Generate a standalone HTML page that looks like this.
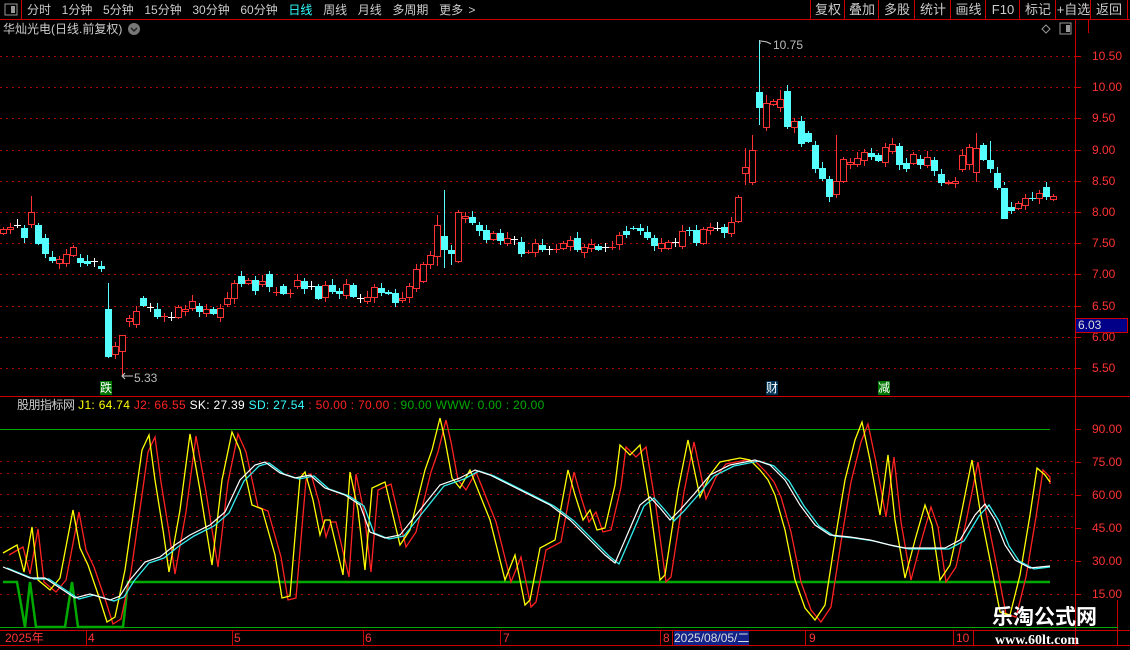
<!DOCTYPE html>
<html><head><meta charset="utf-8"><style>
html,body{margin:0;padding:0;background:#000;width:1130px;height:650px;overflow:hidden}
body{position:relative;font-family:"Liberation Sans","Noto Sans CJK SC",sans-serif;color:#ccc}
.t{position:absolute;font-size:13px;white-space:nowrap;line-height:15px}
.btn{position:absolute;top:0;height:19px;border-left:1px solid #c00;font-size:13px;color:#ccc;text-align:center;line-height:19px}
svg{position:absolute;left:0;top:0}
</style></head><body>
<svg id="s" width="1130" height="650" xmlns="http://www.w3.org/2000/svg"></svg>

<div class="t" style="left:27px;top:3px;font-size:12px;word-spacing:2px">分时&nbsp; 1分钟&nbsp; 5分钟&nbsp; 15分钟&nbsp; 30分钟&nbsp; 60分钟&nbsp; <span style="color:#3ff">日线</span>&nbsp; 周线&nbsp; 月线&nbsp; 多周期&nbsp; 更多 &gt;</div>
<div class="btn" style="left:810px;width:34px">复权</div>
<div class="btn" style="left:844px;width:34px">叠加</div>
<div class="btn" style="left:878px;width:36px">多股</div>
<div class="btn" style="left:914px;width:36px">统计</div>
<div class="btn" style="left:950px;width:35px">画线</div>
<div class="btn" style="left:985px;width:34px">F10</div>
<div class="btn" style="left:1019px;width:36px">标记</div>
<div class="btn" style="left:1055px;width:35px">+自选</div>
<div class="btn" style="left:1090px;width:36px;border-right:1px solid #c00">返回</div>
<div class="t" style="left:3px;top:22px;color:#ccc;font-size:12px">华灿光电(日线.前复权)</div>
<div class="t" style="left:773px;top:38px;color:#bbb;font-size:12px">10.75</div>
<div class="t" style="left:134px;top:371px;color:#bbb;font-size:12px">5.33</div>
<div class="t" style="left:100px;top:381px;background:#070;color:#fff;font-size:12px;line-height:14px">跌</div>
<div class="t" style="left:766px;top:381px;background:#035;color:#fff;font-size:12px;line-height:14px">财</div>
<div class="t" style="left:878px;top:381px;background:#070;color:#fff;font-size:12px;line-height:14px">减</div>
<div class="t" style="left:17px;top:398px;font-size:12px;letter-spacing:0.3px"><span style="color:#ccc;letter-spacing:-0.5px">股朋指标网</span> <span style="color:#ff0">J1: 64.74</span> <span style="color:#f22">J2: 66.55</span> <span style="color:#fff">SK: 27.39</span> <span style="color:#3ff">SD: 27.54</span> <span style="color:#f22">: 50.00 : 70.00</span> <span style="color:#0a0">: 90.00 WWW: 0.00 : 20.00</span></div>
<div id="ax"></div>
<div class="t" style="left:1075px;top:318px;width:53px;height:15px;background:#008;border:1px solid #c00;box-sizing:border-box;color:#ddd;font-size:12px;line-height:13px;padding-left:2px">6.03</div>
<div class="t" style="left:5px;top:631px;color:#f33;font-size:12px">2025年</div>
<div class="t" style="left:88px;top:631px;color:#f33;font-size:12px">4</div>
<div class="t" style="left:234px;top:631px;color:#f33;font-size:12px">5</div>
<div class="t" style="left:365px;top:631px;color:#f33;font-size:12px">6</div>
<div class="t" style="left:503px;top:631px;color:#f33;font-size:12px">7</div>
<div class="t" style="left:663px;top:631px;color:#f33;font-size:12px">8</div>
<div class="t" style="left:674px;top:631px;width:75px;background:#128;color:#ddd;font-size:12px;line-height:14px">2025/08/05/二</div>
<div class="t" style="left:809px;top:631px;color:#f33;font-size:12px">9</div>
<div class="t" style="left:956px;top:631px;color:#f33;font-size:12px">10</div>
<div class="t" style="left:992px;top:606px;color:#fff;font-size:21px;font-weight:bold;line-height:24px">乐淘公式网</div>
<div class="t" style="left:995px;top:633px;color:#fff;font-size:14px;font-weight:bold;font-family:'Liberation Serif',serif">www.60lt.com</div>

<script>
var s=document.getElementById('s'),h='';
function L(x1,y1,x2,y2,c,w,d){h+='<line x1="'+x1+'" y1="'+y1+'" x2="'+x2+'" y2="'+y2+'" stroke="'+c+'" stroke-width="'+(w||1)+'"'+(d?' stroke-dasharray="'+d+'"':'')+'/>';}
function R(x,y,w,hh,f,st){h+='<rect x="'+x+'" y="'+y+'" width="'+w+'" height="'+hh+'" fill="'+f+'"'+(st?' stroke="'+st+'"':'')+'/>';}
function P(pts,c,w){h+='<polyline fill="none" stroke="'+c+'" stroke-width="'+(w||1)+'" points="'+pts.map(function(p){return p[0]+','+p[1]}).join(' ')+'"/>';}
L(0,19.5,1130,19.5,'#c00');L(21.5,0,21.5,19,'#c00');
R(5,4,12,11,'none','#999');R(11,6,4,7,'#999');
h+='<circle cx="134" cy="29" r="6" fill="#777"/><path d="M131 28l3 3 3-3" stroke="#222" fill="none" stroke-width="1.5"/>';
h+='<path d="M1046 25l4 4-4 4-4-4z" fill="none" stroke="#999"/>';R(1060,23,11,11,'none','#999');R(1066,25,4,7,'#999');
L(1075.5,20,1075.5,645,'#c00');L(0,396.5,1130,396.5,'#c00');L(1088.5,20,1088.5,33,'#c00');
L(0,630.5,1130,630.5,'#c00');L(0,645.5,1130,645.5,'#c00');
[86,232,363,500,660,672,805,953,973].forEach(function(x){L(x+.5,631,x+.5,645,'#c00')});
L(1117.5,600,1117.5,645,'#c00');
var ax=document.getElementById('ax'),ah='';
[10.5,10,9.5,9,8.5,8,7.5,7,6.5,6,5.5].forEach(function(p){var y=Math.round(56+(10.5-p)*62.4);L(0,y+.5,1075,y+.5,'#a00',1,'2 4');L(1075,y+.5,1081,y+.5,'#c00');ah+='<div class="t" style="left:1092px;top:'+(y-7)+'px;color:#f33;font-size:12px">'+p.toFixed(2)+'</div>';});
[90,75,60,45,30,15].forEach(function(v){var y=Math.round(429+(90-v)*2.2);L(1075,y+.5,1081,y+.5,'#c00');ah+='<div class="t" style="left:1092px;top:'+(y-7)+'px;color:#f33;font-size:12px">'+v.toFixed(2)+'</div>';});
ax.innerHTML=ah;
[461,473,494,516,527,560,594].forEach(function(y){L(0,y+.5,1075,y+.5,'#a00',1,'2 5')});
var c=[[229,233,'r'],[227,229,'r'],[225,225,'w'],[228,237,'c'],[212,224,'r'],[225,243,'c'],[238,253,'c'],[257,260,'c'],[259,263,'r'],[254,263,'r'],[247,255,'r'],[258,262,'c'],[261,263,'c'],[261,261,'w'],[266,268,'c'],[309,356,'c'],[346,354,'r'],[335,351,'r'],[318,321,'r'],[311,324,'r'],[298,305,'c'],[307,307,'w'],[309,316,'c'],[316,316,'r'],[317,317,'w'],[307,317,'r'],[309,311,'r'],[301,308,'r'],[306,311,'c'],[309,313,'r'],[309,313,'c'],[308,317,'r'],[298,304,'r'],[283,298,'r'],[276,283,'c'],[280,283,'r'],[280,290,'c'],[281,284,'r'],[274,286,'c'],[292,292,'r'],[286,293,'c'],[293,293,'r'],[280,286,'r'],[281,288,'c'],[286,286,'w'],[286,298,'c'],[285,297,'r'],[285,291,'c'],[291,293,'c'],[284,295,'r'],[285,296,'c'],[298,298,'w'],[297,301,'r'],[287,297,'r'],
[288,292,'c'],[292,293,'c'],[293,302,'c'],[298,300,'r'],[286,297,'r'],[269,288,'r'],[264,281,'r'],[255,264,'r'],[225,256,'r'],[236,249,'c'],[250,253,'c'],[212,261,'r'],[216,218,'r'],[217,222,'c'],[225,230,'c'],[230,239,'c'],[233,239,'r'],[233,240,'c'],[238,243,'r'],[239,239,'w'],[242,253,'c'],[252,252,'r'],[243,252,'r'],[245,249,'c'],[249,249,'w'],[249,249,'r'],[243,248,'r'],[240,246,'r'],[238,249,'c'],[247,252,'r'],[244,248,'r'],[246,249,'c'],[247,247,'w'],[247,247,'r'],[235,244,'r'],[231,234,'c'],[228,228,'c'],[228,230,'c'],[232,237,'c'],[238,245,'c'],[243,248,'r'],[242,248,'r'],[242,242,'w'],[231,246,'r'],[230,230,'c'],[230,242,'c'],[229,243,'r'],[227,230,'r'],[228,228,'w'],[227,232,'c'],[222,233,'r'],[197,221,'r'],
[167,173,'r'],[150,182,'r'],[92,107,'c'],[103,127,'r'],[101,104,'r'],[99,107,'r'],[91,126,'c'],[121,127,'r'],[121,143,'c'],[133,141,'c'],[145,168,'c'],[168,178,'c'],[179,196,'c'],[181,194,'r'],[159,181,'r'],[162,164,'r'],[158,164,'r'],[152,160,'r'],[153,156,'c'],[155,160,'c'],[147,162,'r'],[144,151,'r'],[146,164,'c'],[163,168,'c'],[154,163,'r'],[159,164,'c'],[157,165,'r'],[160,170,'c'],[174,182,'c'],[182,183,'r'],[181,183,'r'],[155,169,'r'],[147,164,'r'],[148,172,'r'],[145,159,'c'],[160,168,'c'],[173,187,'c'],[188,218,'c'],[207,210,'c'],[203,208,'r'],[198,205,'r'],[198,198,'c'],[193,198,'r'],[187,196,'c'],[196,199,'r']];
var hi={4:196,15:283,17:340,63:190,62:215,108:40,106:148,107:135,109:95,111:90,119:135,139:133,141:141};
var lo={17:375,15:358,62:266,64:265,108:125,106:185,139:182,143:182,63:268};
c.forEach(function(d,i){var x=3+7*i,col=d[2]=='r'?'#f33':d[2]=='c'?'#5ff':'#fff';var t=d[0],b=d[1];
var hy=hi[i]!=null?hi[i]:t-2-(i*7%5),ly=lo[i]!=null?lo[i]:b+2+(i*3%5);
L(x+.5,hy,x+.5,ly,col);
if(b-t<1){L(x-3,t+.5,x+4,t+.5,col);}
else if(d[2]=='r'){R(x-2.5,t+.5,6,b-t,'#000',col);}
else R(x-3,t,7,b-t+1,col);});
L(760,44,760,40,'#ccc');P([[761,41],[767,42],[771,44]],'#ccc');P([[122,376],[133,376]],'#ccc');P([[125,373],[122,376],[125,379]],'#ccc');
L(0,429.5,1050,429.5,'#0a0');L(0,627.5,1118,627.5,'#0a0');
P([[3,582],[17,582],[25,627],[30,582],[36,627],[65,627],[72,582],[78,627],[123,627],[128,582],[1050,582]],'#0a0',2.5);
var y=[[3,553],[17,545],[24,572],[32,527],[38,580],[50,590],[55,584],[60,578],[73,510],[80,548],[88,565],[100,600],[107,622],[115,617],[125,570],[135,500],[142,450],[149,435],[155,480],[163,530],[169,572],[180,510],[190,434],[200,490],[212,565],[222,480],[232,432],[240,450],[252,505],[262,509],[275,555],[282,598],[290,596],[300,478],[305,472],[313,500],[320,535],[325,520],[330,520],[343,575],[350,472],[358,510],[365,570],[372,488],[385,482],[400,545],[410,530],[425,470],[432,450],[440,418],[445,440],[452,478],[460,488],[470,470],[490,520],[505,580],[515,555],[525,605],[530,600],[540,548],[555,540],[568,470],[575,495],[583,520],[590,510],[597,530],[605,528],[615,485],[620,445],[630,455],[640,445],[650,505],[660,580],[665,575],[678,490],[688,440],[700,497],[710,475],[720,462],[730,460],[740,458],[750,460],[760,470],[768,480],[775,495],[785,530],[795,580],[805,608],[815,620],[825,605],[835,540],[845,480],[855,440],[862,422],[870,460],[880,515],[888,455],[895,520],[905,578],[915,540],[925,505],[932,525],[940,580],[950,565],[960,520],[972,460],[980,510],[990,560],[1000,612],[1010,615],[1020,575],[1030,515],[1037,468],[1045,475],[1050,482]];
var sk=[[3,567],[30,578],[45,578],[60,588],[75,598],[90,594],[110,600],[120,596],[130,580],[145,562],[160,557],[175,545],[190,535],[210,525],[225,512],[240,480],[255,465],[265,462],[280,473],[295,478],[310,475],[325,488],[345,495],[360,505],[370,532],[385,538],[400,535],[420,510],[440,485],[460,478],[475,470],[490,475],[510,485],[530,495],[550,505],[570,520],[590,540],[605,555],[615,563],[625,540],[640,505],[650,497],[660,508],[670,520],[680,510],[695,493],[710,475],[730,465],[755,460],[770,465],[785,480],[800,505],[815,525],[830,535],[850,537],[870,540],[890,545],[905,548],[925,548],[945,548],[960,540],[975,515],[985,504],[995,520],[1005,545],[1015,560],[1030,568],[1050,566]];
P(y.map(function(p){return [Math.min(p[0]+6,1050),p[1]+2]}),'#f22',1.3);
P(y,'#ff0',1.3);
P(sk.map(function(p){return [Math.min(p[0]+4,1050),p[1]+1]}),'#3ee',1.3);
P(sk,'#fff',1.2);
s.innerHTML=h;
</script>
</body></html>
